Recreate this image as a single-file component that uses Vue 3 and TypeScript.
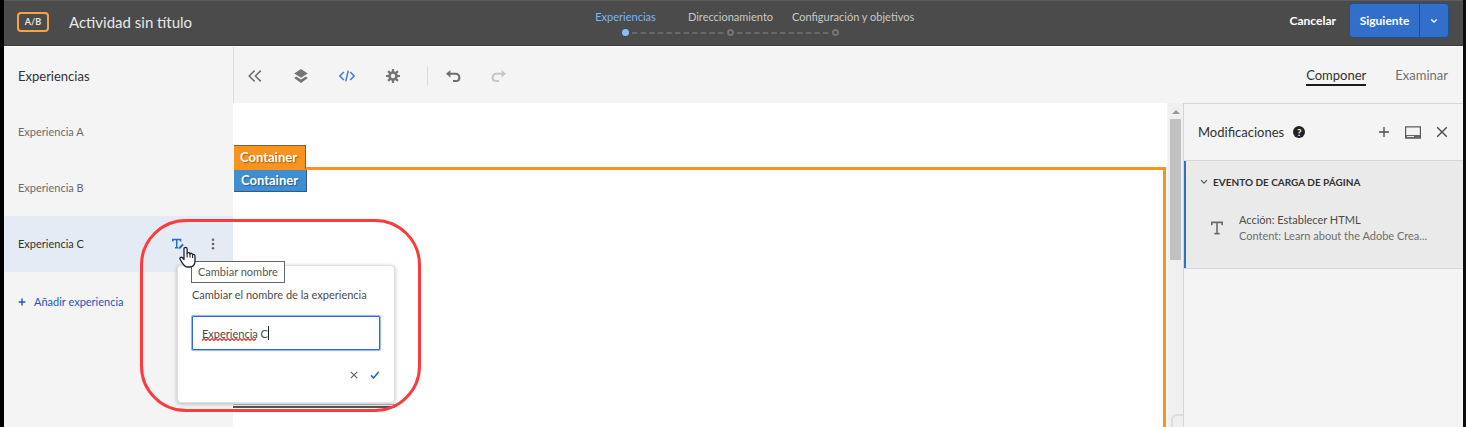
<script setup lang="ts">
import { ref } from 'vue'

const steps = ['Experiencias', 'Direccionamiento', 'Configuración y objetivos']
const experiences = ['Experiencia A', 'Experiencia B', 'Experiencia C']
const selected = ref(2)
const name = ref('Experiencia C')
</script>

<template>
  <div class="app">
    <header class="topbar">
      <div class="identity">
        <span class="badge">A/B</span>
        <h1>Actividad sin título</h1>
      </div>
      <ol class="steps">
        <li v-for="(step, i) in steps" :key="step" :class="{ active: i === 0 }">
          <span class="step-name">{{ step }}</span>
          <span class="track">
            <i class="dot"></i>
            <svg v-if="i < 2" class="dash" width="92" height="2" viewBox="0 0 92 2">
              <path d="M0 1H92" stroke="#747474" stroke-width="1.4" stroke-dasharray="5.4 3.2" />
            </svg>
          </span>
        </li>
      </ol>
      <div class="actions">
        <button class="cancel" type="button">Cancelar</button>
        <div class="split">
          <button class="next" type="button">Siguiente</button>
          <button class="more" type="button" aria-label="Más opciones">
            <svg width="8" height="6" viewBox="0 0 8 6"><path d="M1.2 1.4 4 4 6.8 1.4" fill="none" stroke="#fff" stroke-width="1.4" /></svg>
          </button>
        </div>
      </div>
    </header>

    <div class="body">
      <aside class="sidebar">
        <h2>Experiencias</h2>
        <ul class="list">
          <li v-for="(item, i) in experiences" :key="item" class="row" :class="{ selected: i === selected }">
            <button class="row-name" type="button" @click="selected = i">{{ item }}</button>
            <template v-if="i === 2">
              <button class="icon rename" type="button" aria-label="Cambiar nombre">
                <svg width="12" height="12" viewBox="0 0 12 12">
                  <path d="M0.8 3.6V1.4H8.6V3.6M4.7 1.4V9.6M3 9.8H6.4" fill="none" stroke="#2a68c8" stroke-width="1.5" />
                  <path d="M6.2 11.6 7 8.8 10.4 5.4 12 7 8.8 10.6Z" fill="#2a68c8" stroke="#e5ebf4" stroke-width="0.5" />
                </svg>
              </button>
              <button class="icon dots" type="button" aria-label="Más acciones">
                <svg width="4" height="12" viewBox="0 0 4 12" fill="#666"><circle cx="2" cy="1.7" r="1.3" /><circle cx="2" cy="6" r="1.3" /><circle cx="2" cy="10.3" r="1.3" /></svg>
              </button>
              <span class="cast"></span>
              <form class="popover" @submit.prevent>
                <label for="exp-name">Cambiar el nombre de la experiencia</label>
                <div class="field">
                  <input id="exp-name" v-model="name" type="text" spellcheck="false" />
                  <svg class="squiggle" width="54" height="3" viewBox="0 0 54 3">
                    <path d="M0 2.4 2 .6 4 2.4 6 .6 8 2.4 10 .6 12 2.4 14 .6 16 2.4 18 .6 20 2.4 22 .6 24 2.4 26 .6 28 2.4 30 .6 32 2.4 34 .6 36 2.4 38 .6 40 2.4 42 .6 44 2.4 46 .6 48 2.4 50 .6 52 2.4 54 .6" fill="none" stroke="#e5303a" stroke-width="1.3" />
                  </svg>
                  <span class="caret"></span>
                </div>
                <div class="popover-actions">
                  <button type="button" aria-label="Descartar">
                    <svg width="8" height="8" viewBox="0 0 8 8"><path d="M.8.8 7.2 7.2M7.2.8.8 7.2" stroke="#666" stroke-width="1.2" /></svg>
                  </button>
                  <button type="submit" aria-label="Aceptar">
                    <svg width="10" height="8" viewBox="0 0 10 8"><path d="M1 4.4 3.5 7 8.8.8" fill="none" stroke="#2368c9" stroke-width="1.6" /></svg>
                  </button>
                </div>
              </form>
              <span class="tooltip" role="tooltip">Cambiar nombre</span>
              <svg class="pointer" width="17" height="22" viewBox="0 0 17 22">
                <path d="M5 13.6V3.1C5 .7 8.1.7 8.1 3.1V7.6C8.4 6.1 10.8 6.2 11 8 11.5 6.8 13.5 7.1 13.6 8.8 14.3 8 16 8.4 16 10.2V15.1C16 19 14 21 10.5 21H8.7C5.9 21 4.6 18.8 3 16.4L1.2 13.5C.2 11.7 2.3 10.5 3.6 12Z" fill="#fff" stroke="#1b2233" stroke-width="1.3" stroke-linejoin="round" />
                <path d="M8.1 7.4V11.4M11 8V11.6M13.6 8.8V12" stroke="#1b2233" stroke-width="1.1" />
              </svg>
              <span class="callout"></span>
            </template>
          </li>
        </ul>
        <button class="add" type="button">
          <svg width="8" height="8" viewBox="0 0 8 8"><path d="M4 .6V7.4M.6 4H7.4" stroke="#2257b8" stroke-width="1.5" /></svg>
          Añadir experiencia
        </button>
      </aside>

      <main class="main">
        <div class="toolbar">
          <div class="tools">
            <button class="icon" type="button" aria-label="Contraer">
              <svg width="16" height="16" viewBox="0 0 16 16"><path d="M7.6 2.6 2.2 8 7.6 13.4M13.8 2.6 8.4 8 13.8 13.4" fill="none" stroke="#6e6e6e" stroke-width="1.5" /></svg>
            </button>
            <button class="icon" type="button" aria-label="Capas">
              <svg width="16" height="16" viewBox="0 0 16 16" fill="#747474"><path d="M8 1 14.8 5.4 8 9.8 1.2 5.4Z" /><path d="M3.2 8.4 8 11.5 12.8 8.4 14.8 9.9 8 15 1.2 9.9Z" /></svg>
            </button>
            <button class="icon" type="button" aria-label="Código">
              <svg width="16" height="16" viewBox="0 0 16 16"><path d="M4.8 4 .9 8 4.8 12M11.2 4 15.1 8 11.2 12M9.2 2.6 6.8 13.4" fill="none" stroke="#3c7ddb" stroke-width="1.5" /></svg>
            </button>
            <button class="icon" type="button" aria-label="Ajustes">
              <svg width="16" height="16" viewBox="0 0 16 16"><g stroke="#747474" stroke-width="2.2"><path d="M8 1V4M8 12V15M1 8H4M12 8H15M3.1 3.1 5.2 5.2M10.8 10.8 12.9 12.9M12.9 3.1 10.8 5.2M5.2 10.8 3.1 12.9" /></g><circle cx="8" cy="8" r="3.5" fill="none" stroke="#747474" stroke-width="2.6" /></svg>
            </button>
            <span class="divider"></span>
            <button class="icon" type="button" aria-label="Deshacer">
              <svg width="16" height="16" viewBox="0 0 16 16"><path d="M3.6 5.8H10.6C15.6 5.8 15.6 13 10.6 13H8" fill="none" stroke="#6e6e6e" stroke-width="2.1" /><path d="M5.4 2 1 5.8 5.4 9.6Z" fill="#6e6e6e" /></svg>
            </button>
            <button class="icon" type="button" aria-label="Rehacer" disabled>
              <svg width="16" height="16" viewBox="0 0 16 16"><path d="M12.4 5.8H5.4C.4 5.8 .4 13 5.4 13H8" fill="none" stroke="#c6c6c6" stroke-width="2.1" /><path d="M10.6 2 15 5.8 10.6 9.6Z" fill="#c6c6c6" /></svg>
            </button>
          </div>
          <nav class="tabs">
            <a href="#componer" class="current">Componer</a>
            <a href="#examinar">Examinar</a>
          </nav>
        </div>

        <div class="workspace">
          <section class="canvas">
            <span class="tag orange">Container</span>
            <div class="outline"><span class="tag blue">Container</span></div>
          </section>
          <div class="scroll">
            <i class="arrow"></i>
            <i class="thumb"></i>
            <i class="corner"></i>
          </div>
          <aside class="panel">
            <div class="panel-head">
              <h2>Modificaciones</h2>
              <span class="help">?</span>
              <div class="panel-tools">
                <button type="button" aria-label="Añadir"><svg width="12" height="12" viewBox="0 0 12 12"><path d="M6 1V11M1 6H11" stroke="#4b4b4b" stroke-width="1.3" /></svg></button>
                <button type="button" aria-label="Acoplar"><svg width="16" height="13" viewBox="0 0 16 13"><path d="M.6.8H15.4V12.2H.6Z" fill="none" stroke="#5b5b5b" stroke-width="1.2" /><path d="M1 9H15V12H1Z" fill="#666" /><path d="M2 10.5H9" stroke="#e8e8e8" /></svg></button>
                <button type="button" aria-label="Cerrar"><svg width="12" height="12" viewBox="0 0 12 12"><path d="M1.2 1.2 10.8 10.8M10.8 1.2 1.2 10.8" stroke="#4b4b4b" stroke-width="1.4" /></svg></button>
              </div>
            </div>
            <div class="event">
              <button class="event-title" type="button">
                <svg width="8" height="6" viewBox="0 0 8 6"><path d="M1 1.2 4 4.2 7 1.2" fill="none" stroke="#555" stroke-width="1.2" /></svg>
                EVENTO DE CARGA DE PÁGINA
              </button>
              <div class="change">
                <svg width="12" height="14" viewBox="0 0 12 14"><path d="M.8 4.2V1.4H11.2V4.2M6 1.4V12.4M3.4 12.6H8.6" fill="none" stroke="#6b6b6b" stroke-width="1.6" /></svg>
                <div class="change-text">
                  <p class="action">Acción: Establecer HTML</p>
                  <p class="content">Content: Learn about the Adobe Crea...</p>
                </div>
              </div>
            </div>
          </aside>
        </div>
      </main>
    </div>
  </div>
</template>

<style>
body {
  background: #fff;
}
</style>

<style scoped>
* {
  box-sizing: border-box;
}
.app {
  display: flex;
  flex-direction: column;
  min-height: 100vh;
  border-left: 4px solid #000;
  border-right: 3px solid #0c0c0c;
  background: #f4f4f4;
  color: #323232;
  font: 11px/16px Lato, "Liberation Sans", sans-serif;
}
button {
  display: inline-flex;
  align-items: center;
  justify-content: center;
  padding: 0;
  border: 0;
  background: none;
  color: inherit;
  font: inherit;
  white-space: nowrap;
}
h1, h2, p, ol, ul {
  margin: 0;
  padding: 0;
  font-weight: 400;
  list-style: none;
}
svg {
  display: block;
}
.topbar {
  display: grid;
  grid-template-columns: 1fr 315px 1fr;
  height: 46px;
  padding: 0 14px 0 8px;
  border-top: 1px solid #5c5c5c;
  border-bottom: 1px solid #3a3a3a;
  background: #4b4b4b;
}
.identity {
  display: flex;
  align-items: center;
  gap: 20px;
  padding: 0 0 3px 5px;
}
.badge {
  width: 32px;
  height: 20px;
  border: 2px solid #f7a24b;
  border-radius: 4px;
  color: #e6e6e6;
  font-size: 9px;
  font-weight: 700;
  line-height: 16px;
  text-align: center;
}
h1 {
  color: #e8e8e8;
  font-size: 15px;
  line-height: 20px;
}
.steps {
  display: flex;
  padding-top: 8px;
}
.steps li {
  display: flex;
  flex: 0 0 105px;
  flex-direction: column;
  min-width: 0;
  padding: 0 9px;
  color: #c8c8c8;
  text-align: center;
  white-space: nowrap;
}
.steps .active {
  color: #78b5fa;
}
.track {
  display: flex;
  align-items: center;
  gap: 3px;
  height: 7px;
  margin: 4px 0 0 40px;
}
.dot {
  flex: none;
  width: 7px;
  height: 7px;
  border: 2px solid #747474;
  border-radius: 50%;
}
.active .dot {
  border-color: #88bffb;
  background: #88bffb;
}
.dash {
  flex: none;
}
.actions {
  display: flex;
  align-items: center;
  justify-content: flex-end;
  gap: 13px;
  padding-bottom: 5px;
  color: #fff;
  font-size: 12px;
  font-weight: 700;
}
.split {
  display: flex;
  overflow: hidden;
  border: 1px solid #244f8e;
  border-radius: 4px;
}
.next, .more {
  height: 33px;
  background: #326fcb;
}
.next {
  width: 70px;
  border-right: 1px solid #244f8e;
}
.more {
  width: 28px;
}
.body {
  display: flex;
  flex: 1;
  border-top: 1px solid #fff;
}
.sidebar {
  flex: 0 0 229px;
}
.sidebar h2 {
  padding: 19px 14px 18px;
  color: #323232;
  font-size: 13px;
  line-height: 20px;
}
.row {
  position: relative;
  display: flex;
  align-items: center;
  height: 56px;
  padding: 0 18px 0 14px;
  color: #6b6b6b;
}
.selected {
  background: #e5ebf4;
  color: #323232;
}
.row-name {
  flex: 1;
  justify-content: flex-start;
}
.rename {
  margin-right: 27px;
}
.add {
  gap: 8px;
  margin: 22px 0 0 14px;
  color: #2257b8;
}
.popover {
  position: absolute;
  z-index: 2;
  top: 49px;
  left: 173px;
  width: 218px;
  padding: 21px 14px 23px;
  border: 1px solid #e0e0e0;
  border-radius: 4px;
  background: #fff;
  box-shadow: 0 1px 4px rgba(0, 0, 0, 0.25);
  color: #4b4b4b;
}
.popover label {
  display: block;
  white-space: nowrap;
}
.field {
  position: relative;
  margin-top: 13px;
}
.field input {
  display: block;
  width: 100%;
  height: 34px;
  padding: 0 9px;
  border: 1px solid #2f6cc9;
  border-radius: 1px;
  outline: 0;
  background: #fff;
  box-shadow: 0 0 1px 1px #8fb2e6;
  color: #4b4b4b;
  font: inherit;
}
.squiggle {
  position: absolute;
  top: 22px;
  left: 10px;
}
.caret {
  position: absolute;
  top: 10px;
  left: 76px;
  width: 1px;
  height: 14px;
  background: #222;
}
.popover-actions {
  display: flex;
  justify-content: flex-end;
  gap: 12px;
  padding-top: 21px;
}
.cast {
  position: absolute;
  z-index: 1;
  top: 188px;
  left: 229px;
  width: 162px;
  height: 4px;
  border-top: 1px solid #b8b8b8;
  border-bottom: 2px solid #555;
  background: #eee;
}
.tooltip {
  position: absolute;
  z-index: 3;
  top: 45px;
  left: 187px;
  padding: 2px 6px;
  border: 1px solid #646464;
  background: #fff;
  color: #575757;
  white-space: nowrap;
}
.pointer {
  position: absolute;
  z-index: 4;
  top: 30px;
  left: 175px;
}
.callout {
  position: absolute;
  z-index: 5;
  top: 3px;
  left: 136px;
  width: 281px;
  height: 193px;
  border: 3px solid #fb3b3d;
  border-radius: 46px;
  pointer-events: none;
}
.main {
  display: flex;
  flex: 1;
  flex-direction: column;
  min-width: 0;
}
.toolbar {
  display: flex;
  align-items: center;
  justify-content: space-between;
  height: 56px;
  padding: 2px 15px 0 13px;
  border-left: 1px solid #ddd;
}
.tools {
  display: flex;
  align-items: center;
  gap: 30px;
}
.divider {
  width: 1px;
  height: 20px;
  margin: 0 -13px 0 -4px;
  background: #dcdcdc;
}
.tabs {
  display: flex;
  gap: 29px;
  font-size: 13px;
  line-height: 18px;
}
.tabs a {
  border-bottom: 2px solid transparent;
  color: #707070;
  text-decoration: none;
}
.tabs .current {
  border-color: #1b1b1b;
  color: #323232;
}
.workspace {
  display: flex;
  flex: 1;
}
.canvas {
  display: flex;
  flex: 1;
  flex-direction: column;
  align-items: flex-start;
  min-width: 0;
  padding: 42px 1px 0 1px;
  background: #fff;
}
.tag {
  display: block;
  color: #fff;
  font-size: 13px;
  font-weight: 700;
  text-shadow: 1px 1px 1px rgba(0, 0, 0, 0.35);
}
.orange {
  z-index: 1;
  width: 72px;
  height: 24px;
  margin-bottom: -2px;
  padding-left: 6px;
  border: 1px solid #7d6238;
  border-width: 1px 1px 0 0;
  background: #f7931e;
  line-height: 22px;
}
.outline {
  flex: 1;
  align-self: stretch;
  border: 3px solid #f7931e;
  border-width: 3px 3px 0 0;
}
.blue {
  width: 73px;
  height: 22px;
  padding-left: 7px;
  border: 1px solid #35597a;
  border-width: 0 1px 1px 0;
  background: #3f8ed1;
  line-height: 21px;
}
.scroll {
  display: flex;
  flex: 0 0 16px;
  flex-direction: column;
  align-items: center;
  border-left: 1px solid #f4f4f4;
  background: #f0f0f0;
}
.arrow {
  margin: 7px 0 5px;
  border: 4px solid transparent;
  border-top-width: 0;
  border-bottom-color: #999;
}
.thumb {
  width: 11px;
  height: 141px;
  background: #c1c1c1;
}
.corner {
  align-self: flex-end;
  width: 12px;
  height: 13px;
  margin-top: auto;
  border: 2px solid #ddd;
  border-width: 2px 0 0 2px;
  border-radius: 6px 0 0 0;
}
.panel {
  flex: 0 0 280px;
  border-top: 1px solid #d6d6d6;
  border-left: 1px solid #d6d6d6;
}
.panel-head {
  display: flex;
  align-items: center;
  height: 56px;
  padding: 0 15px 0 14px;
}
.panel h2 {
  font-size: 13px;
  line-height: 20px;
}
.help {
  width: 12px;
  height: 12px;
  margin-left: 9px;
  border-radius: 50%;
  background: #222;
  color: #fff;
  font-size: 10px;
  font-weight: 700;
  line-height: 12px;
  text-align: center;
}
.panel-tools {
  display: flex;
  align-items: center;
  gap: 15px;
  margin-left: auto;
}
.event {
  padding: 12px 14px 24px 16px;
  border: 1px solid #d6d6d6;
  border-width: 1px 0;
  background: #eaeaea;
  box-shadow: inset 2px 0 #2f6fcf;
}
.event-title {
  gap: 5px;
  color: #323232;
  font-size: 10px;
  font-weight: 700;
}
.change {
  display: flex;
  align-items: center;
  gap: 16px;
  margin-top: 22px;
  padding-left: 11px;
}
.action {
  color: #4b4b4b;
}
.content {
  color: #6e6e6e;
}
</style>
